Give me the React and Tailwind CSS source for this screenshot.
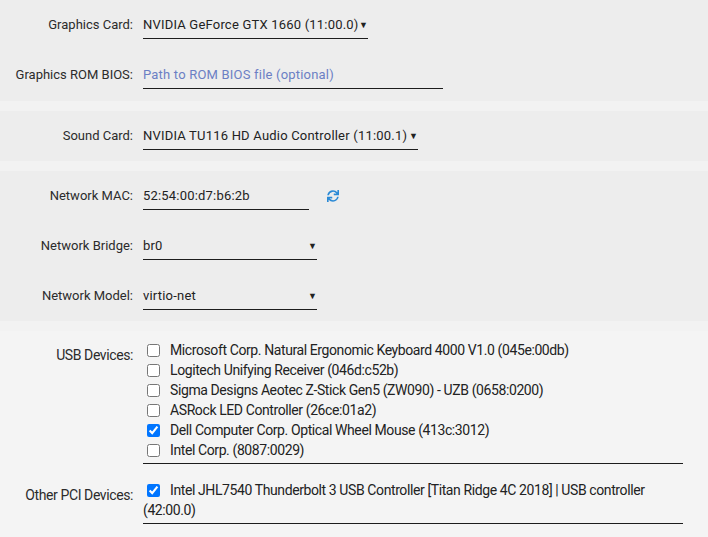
import React from 'react'
import { FaSync } from 'react-icons/fa'

// VM settings form: passthrough devices, network, USB

const font = { fontFamily: 'Roboto, "Open Sans", sans-serif' }

function Row({ label, children }) {
  return (
    <div className="flex h-[50px] items-start pt-[15px]">
      <div className="w-[133px] shrink-0 text-right leading-[20px] text-[#2b2b2b]">{label}</div>
      <div className="ml-[10px] tracking-[0.2px]">{children}</div>
    </div>
  )
}

function Select({ value, width }) {
  return (
    <div className={`flex items-center justify-between border-b border-[#1c1c1c] pb-[3px] leading-[20px] text-[#222] ${width}`}>
      <span>{value}</span>
      <span className="text-[9px] leading-[20px]">▼</span>
    </div>
  )
}

const usb = [
  { name: 'Microsoft Corp. Natural Ergonomic Keyboard 4000 V1.0 (045e:00db)', on: false },
  { name: 'Logitech Unifying Receiver (046d:c52b)', on: false },
  { name: 'Sigma Designs Aeotec Z-Stick Gen5 (ZW090) - UZB (0658:0200)', on: false },
  { name: 'ASRock LED Controller (26ce:01a2)', on: false },
  { name: 'Dell Computer Corp. Optical Wheel Mouse (413c:3012)', on: true },
  { name: 'Intel Corp. (8087:0029)', on: false },
]

export default function App() {
  return (
    <div className="min-h-[537px] w-full bg-[#f2f2f2] text-[13px]" style={font}>
      {/* Graphics */}
      <div className="h-[101px] bg-[#ededed]">
        <Row label="Graphics Card:">
          <Select value="NVIDIA GeForce GTX 1660 (11:00.0)" width="w-[225px]" />
        </Row>
        <Row label="Graphics ROM BIOS:">
          <div className="w-[300px] border-b border-[#1c1c1c] pb-[3px] leading-[20px] text-[#6b7fc4]">
            Path to ROM BIOS file (optional)
          </div>
        </Row>
      </div>

      {/* Sound */}
      <div className="mt-[10px] h-[50px] bg-[#ededed]">
        <Row label="Sound Card:">
          <Select value="NVIDIA TU116 HD Audio Controller (11:00.1)" width="w-[275px]" />
        </Row>
      </div>

      {/* Network */}
      <div className="mt-[10px] h-[150px] bg-[#ededed]">
        <Row label="Network MAC:">
          <div className="flex items-start">
            <div className="w-[166px] border-b border-[#1c1c1c] pb-[3px] leading-[20px] text-[#222]">52:54:00:d7:b6:2b</div>
            <FaSync className="ml-[18px] mt-[4px] text-[12px] text-[#2b8ad6]" />
          </div>
        </Row>
        <Row label="Network Bridge:">
          <Select value="br0" width="w-[174px]" />
        </Row>
        <Row label="Network Model:">
          <Select value="virtio-net" width="w-[174px]" />
        </Row>
      </div>

      {/* USB + PCI */}
      <div className="mt-[10px] bg-[#f4f4f4] pb-[13px] pt-[9px] text-[14px] tracking-[-0.4px]">
        <div className="flex items-start">
          <div className="mt-[5px] w-[133px] shrink-0 text-right leading-[20px] text-[#2b2b2b]">USB Devices:</div>
          <div className="ml-[10px] w-[540px] border-b border-[#1c1c1c] pb-[3px] leading-[20px] text-[#222]">
            {usb.map((d) => (
              <label key={d.name} className="block">
                <input type="checkbox" defaultChecked={d.on} className="ml-[4px] mr-[3px] align-[-2px]" />
                <span className="ml-[7px]">{d.name}</span>
              </label>
            ))}
          </div>
        </div>
        <div className="mt-[16px] flex items-start">
          <div className="mt-[5px] w-[133px] shrink-0 text-right leading-[20px] text-[#2b2b2b]">Other PCI Devices:</div>
          <div className="ml-[10px] w-[540px] border-b border-[#1c1c1c] pb-[3px] leading-[20px] text-[#222]">
            <label>
              <input type="checkbox" defaultChecked className="ml-[4px] mr-[3px] align-[-2px]" />
              <span className="ml-[7px]">Intel JHL7540 Thunderbolt 3 USB Controller [Titan Ridge 4C 2018] | USB controller (42:00.0)</span>
            </label>
          </div>
        </div>
      </div>
    </div>
  )
}
